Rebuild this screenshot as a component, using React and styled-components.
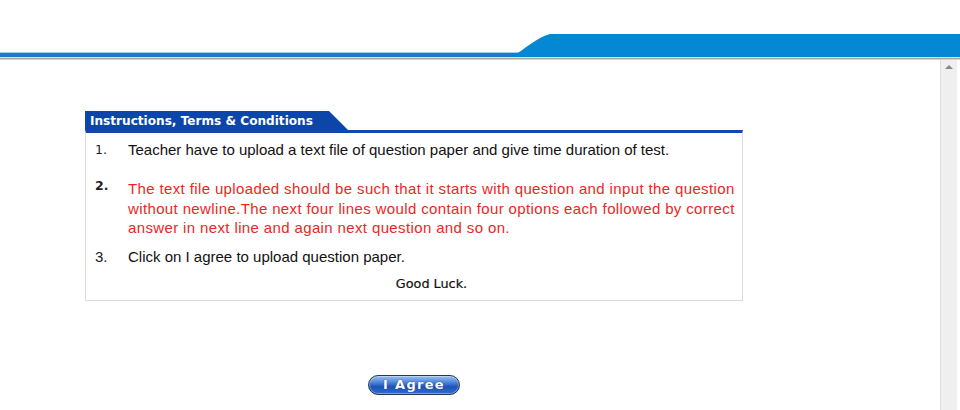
import React from "react";
import styled, { createGlobalStyle } from "styled-components";

const Global = createGlobalStyle`
  html, body { margin: 0; padding: 0; background: #fff; }
  body { font-family: "Liberation Sans", Arial, sans-serif; }
`;

const Page = styled.div`
  display: flex;
  flex-direction: column;
  width: 960px;
  height: 410px;
  overflow: hidden;
`;

const Header = styled.header`
  height: 60px;
  flex: none;
  svg { display: block; }
`;

const Body = styled.div`
  flex: 1;
  display: flex;
  min-height: 0;
`;

const Main = styled.main`
  flex: 1;
  padding: 51px 0 0 85px;
`;

const Column = styled.div`
  width: 658px;
  display: flex;
  flex-direction: column;
`;

const Tab = styled.div`
  width: 263px;
  height: 19px;
  background: #0c46a8;
  clip-path: polygon(0 0, 244px 0, 100% 100%, 0 100%);
  color: #fff;
  font-family: "DejaVu Sans", Verdana, sans-serif;
  font-weight: bold;
  font-size: 12.1px;
  line-height: 20px;
  padding-left: 5px;
  box-sizing: border-box;
  white-space: nowrap;
`;

const Panel = styled.div`
  border-top: 3px solid #1348aa;
  border-left: 1px solid #dcdcdc;
  border-right: 1px solid #dcdcdc;
  border-bottom: 1px solid #dcdcdc;
  padding: 7px 0 6px 0;
`;

const Item = styled.div`
  display: flex;
  margin-top: ${(p) => p.$gap || 0}px;
`;

const Num = styled.div`
  width: 33px;
  padding-left: 9px;
  flex: none;
  font-family: ${(p) => (p.$plain ? '"Liberation Sans", Arial, sans-serif' : '"DejaVu Sans", Verdana, sans-serif')};
  font-size: ${(p) => (p.$plain ? 15 : 12.5)}px;
  font-weight: ${(p) => (p.$bold ? "bold" : "normal")};
  line-height: ${(p) => (p.$raise ? 14 : 20)}px;
  color: #222;
`;

const Text = styled.div`
  width: 620px;
  font-size: 15px;
  line-height: 19.5px;
  color: ${(p) => (p.$red ? "#e8291d" : "#111")};
  letter-spacing: ${(p) => (p.$red ? 0.37 : 0)}px;
`;

const Luck = styled.div`
  margin: 7px 0 0 42px;
  width: 607px;
  text-align: center;
  font-family: "DejaVu Sans", Verdana, sans-serif;
  font-size: 12.8px;
  line-height: 20px;
  color: #111;
  -webkit-text-stroke: 0.2px #111;
`;

const ButtonRow = styled.div`
  display: flex;
  justify-content: center;
  margin-top: 74px;
`;

const AgreeButton = styled.button`
  width: 92px;
  height: 20px;
  border: 1px solid #2a3550;
  border-radius: 10px;
  background: linear-gradient(#9cc0ef 0%, #4f86dc 35%, #1d52b8 60%, #2f6cd2 100%);
  box-shadow: inset 0 0 0 1px rgba(255,255,255,0.35);
  color: #fff;
  font-family: "DejaVu Sans", Verdana, sans-serif;
  font-weight: bold;
  font-size: 13px;
  letter-spacing: 1.3px;
  padding: 0;
  line-height: 18px;
  text-shadow: 0 0 1px #123;
  cursor: pointer;
`;

const Scrollbar = styled.div`
  width: 17px;
  flex: none;
  margin-right: 3px;
  background: #efefef;
  border-left: 1px solid #dedede;
  display: flex;
  justify-content: center;
  padding-top: 5px;
  box-sizing: border-box;
`;

const Arrow = styled.div`
  width: 0;
  height: 0;
  border-left: 4px solid transparent;
  border-right: 4px solid transparent;
  border-bottom: 4px solid #888;
`;

function Banner() {
  return (
    <svg width="960" height="60" viewBox="0 0 960 60">
      <rect x="0" y="52" width="960" height="1" fill="#9bd3ef" />
      <rect x="0" y="53" width="960" height="4" fill="#1f7ac0" />
      <rect x="0" y="57" width="960" height="1" fill="#cfe3f0" />
      <rect x="0" y="58" width="960" height="1.5" fill="#a7a7a7" />
      <path d="M512,57 C526,48 536,38 550,34 L960,34 L960,57 Z" fill="#0588d4" />
    </svg>
  );
}

export default function App() {
  return (
    <>
      <Global />
      <Page>
        <Header>
          <Banner />
        </Header>
        <Body>
          <Main>
            <Column>
              <Tab>Instructions, Terms &amp; Conditions</Tab>
              <Panel>
                <Item>
                  <Num>1.</Num>
                  <Text>Teacher have to upload a text file of question paper and give time duration of test.</Text>
                </Item>
                <Item $gap={19}>
                  <Num $bold $raise>2.</Num>
                  <Text $red>
                    The text file uploaded should be such that it starts with question and input the question
                    without newline.The next four lines would contain four options each followed by correct
                    answer in next line and again next question and so on.
                  </Text>
                </Item>
                <Item $gap={9}>
                  <Num $plain>3.</Num>
                  <Text>Click on I agree to upload question paper.</Text>
                </Item>
                <Luck>Good Luck.</Luck>
              </Panel>
              <ButtonRow>
                <AgreeButton>I Agree</AgreeButton>
              </ButtonRow>
            </Column>
          </Main>
          <Scrollbar>
            <Arrow />
          </Scrollbar>
        </Body>
      </Page>
    </>
  );
}
